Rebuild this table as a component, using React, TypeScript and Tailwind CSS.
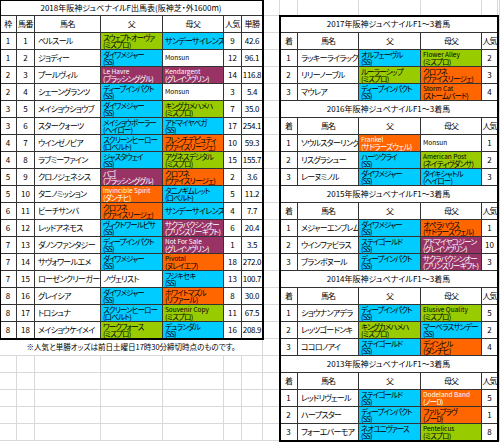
import React from "react";

// 血統セルの色
const colorCls: Record<string, string> = {
  g: "bg-[#99cc00] text-black",
  c: "bg-[#00ccff] text-black",
  o: "bg-[#ff6600] text-black",
  ow: "bg-[#ff6600] text-white",
  p: "bg-[#993366] text-white",
  w: "bg-white text-black",
};

type Blood = [string, string, string];
type Entry = [number, number, string, Blood, Blood, number, string];
type Placed = [number, string, Blood, Blood, number];

const entries: Entry[] = [
  [1, 1, "ベルスール", ["スウェプトオーヴァ", "(ミスプロ)", "g"], ["サンデーサイレンス", "", "c"], 9, "42.6"],
  [1, 2, "ジョディー", ["ダイワメジャー", "(SS)", "c"], ["Monsun", "", "w"], 12, "96.1"],
  [2, 3, "プールヴィル", ["Le Havre", "(ブラッシンググル)", "p"], ["Kendargent", "(グレイソヴリン)", "p"], 14, "116.8"],
  [2, 4, "シェーングランツ", ["ディープインパクト", "(SS)", "c"], ["Monsun", "", "w"], 3, "5.4"],
  [3, 5, "メイショウショウブ", ["ダイワメジャー", "(SS)", "c"], ["キングカメハメハ", "(ミスプロ)", "g"], 7, "35.0"],
  [3, 6, "スタークォーツ", ["メイショウボーラー", "(ヘイロー)", "c"], ["アドマイヤベガ", "(SS)", "c"], 17, "254.1"],
  [4, 7, "ウインゼノビア", ["スクリーンヒーロー", "(ロベルト)", "c"], ["フレンチデピュティ", "(ヴァイスリージェ)", "o"], 10, "59.3"],
  [4, 8, "ラブミーファイン", ["ジャスタウェイ", "(SS)", "c"], ["アグネスデジタル", "(ミスプロ)", "g"], 15, "155.7"],
  [5, 9, "クロノジェネシス", ["バゴ", "(ブラッシンググル)", "p"], ["クロフネ", "(ヴァイスリージェ)", "o"], 2, "3.6"],
  [5, 10, "タニノミッション", ["Invincible Spirit", "(ダンチヒ)", "ow"], ["タニノギムレット", "(ロベルト)", "c"], 5, "11.2"],
  [6, 11, "ビーチサンバ", ["クロフネ", "(ヴァイスリージェ)", "o"], ["サンデーサイレンス", "", "c"], 4, "7.7"],
  [6, 12, "レッドアネモス", ["ヴィクトワールピサ", "(SS)", "c"], ["サクラバクシンオー", "(プリンスリーギフト)", "p"], 6, "20.4"],
  [7, 13, "ダノンファンタジー", ["ディープインパクト", "(SS)", "c"], ["Not For Sale", "(グレイソヴリン)", "p"], 1, "3.5"],
  [7, 14, "サヴォワールエメ", ["ダイワメジャー", "(SS)", "c"], ["Pivotal", "(ヌレイエフ)", "o"], 18, "272.0"],
  [7, 15, "ローゼンクリーガー", ["ノヴェリスト", "", "w"], ["フジキセキ", "(SS)", "c"], 13, "100.7"],
  [8, 16, "グレイシア", ["ダイワメジャー", "(SS)", "c"], ["ホワイトマズル", "(リファール)", "o"], 8, "30.0"],
  [8, 17, "トロシュナ", ["スクリーンヒーロー", "(ロベルト)", "c"], ["Souvenir Copy", "(ミスプロ)", "g"], 11, "67.5"],
  [8, 18, "メイショウケイメイ", ["ワークフォース", "(ミスプロ)", "g"], ["デュランダル", "(SS)", "c"], 16, "208.9"],
];

const history: { year: number; rows: Placed[] }[] = [
  {
    year: 2017,
    rows: [
      [1, "ラッキーライラック", ["オルフェーヴル", "(SS)", "c"], ["Flower Alley", "(ミスプロ)", "g"], 2],
      [2, "リリーノーブル", ["ルーラーシップ", "(ミスプロ)", "g"], ["クロフネ", "(ヴァイスリージェ)", "o"], 3],
      [3, "マウレア", ["ディープインパクト", "(SS)", "c"], ["Storm Cat", "(ストームバード)", "o"], 4],
    ],
  },
  {
    year: 2016,
    rows: [
      [1, "ソウルスターリング", ["Frankel", "(サドラーズウェル)", "ow"], ["Monsun", "", "w"], 1],
      [2, "リスグラシュー", ["ハーツクライ", "(SS)", "c"], ["American Post", "(ネイティヴダンサ)", "g"], 2],
      [3, "レーヌミノル", ["ダイワメジャー", "(SS)", "c"], ["タイキシャトル", "(ヘイロー)", "c"], 3],
    ],
  },
  {
    year: 2015,
    rows: [
      [1, "メジャーエンブレム", ["ダイワメジャー", "(SS)", "c"], ["オペラハウス", "(サドラーズウェル)", "o"], 1],
      [2, "ウインファビラス", ["ステイゴールド", "(SS)", "c"], ["アドマイヤコジーン", "(グレイソヴリン)", "p"], 10],
      [3, "ブランボヌール", ["ディープインパクト", "(SS)", "c"], ["サクラバクシンオー", "(プリンスリーギフト)", "p"], 3],
    ],
  },
  {
    year: 2014,
    rows: [
      [1, "ショウナンアデラ", ["ディープインパクト", "(SS)", "c"], ["Elusive Quality", "(ミスプロ)", "g"], 5],
      [2, "レッツゴードンキ", ["キングカメハメハ", "(ミスプロ)", "g"], ["マーベラスサンデー", "(SS)", "c"], 2],
      [3, "ココロノアイ", ["ステイゴールド", "(SS)", "c"], ["デインヒル", "(ダンチヒ)", "o"], 4],
    ],
  },
  {
    year: 2013,
    rows: [
      [1, "レッドリヴェール", ["ステイゴールド", "(SS)", "c"], ["Dodeland Band", "(ノーD)", "ow"], 5],
      [2, "ハープスター", ["ディープインパクト", "(SS)", "c"], ["ファルブラヴ", "(ノーD)", "o"], 1],
      [3, "フォーエバーモア", ["ネオユニヴァース", "(SS)", "c"], ["Pentelicus", "(ミスプロ)", "g"], 8],
    ],
  },
];

const cell = "border-r border-b border-[#333] overflow-hidden whitespace-nowrap";

const Center = ({ children, className = "" }: { children: React.ReactNode; className?: string }) => (
  <div className={`${cell} flex items-center justify-center text-[8px] ${className}`}>{children}</div>
);

const NameCell = ({ name }: { name: string }) => (
  <div className={`${cell} flex items-center pl-[3px] text-[8px] tracking-[-0.7px] bg-white`}>{name}</div>
);

const BloodCell = ({ blood }: { blood: Blood }) => {
  const [l1, l2, k] = blood;
  const ascii = /^[A-Za-z ]+$/.test(l1);
  if (!l2) {
    return (
      <div
        className={`${cell} ${colorCls[k]} flex items-center pl-[2px] ${
          ascii ? "text-[6.5px] tracking-normal" : "text-[8px] tracking-[-0.7px]"
        }`}
      >
        {l1}
      </div>
    );
  }
  return (
    <div className={`${cell} ${colorCls[k]} flex flex-col justify-center pl-[2px] leading-[7.5px]`}>
      <span className={ascii ? "text-[6.5px]" : "text-[7.5px] tracking-[-0.9px]"}>{l1}</span>
      <span className="text-[7.5px] tracking-[-0.8px]">{l2}</span>
    </div>
  );
};

export default function App() {
  return (
    <div className="w-[500px] h-[442px] overflow-hidden bg-white text-black font-['Noto_Sans_CJK_JP',sans-serif] [font-feature-settings:'palt']">
      <div className="grid grid-cols-[17px_18px_66px_62px_61px_18px_21px_17px_18px_61px_62px_61px_16px_2px] grid-rows-[16px_repeat(25,17px)]">
        {/* 出馬表 */}
        <div className="col-start-1 col-span-7 row-start-1 row-span-20 grid grid-cols-[17px_18px_66px_62px_61px_18px_21px] grid-rows-[16px_repeat(19,17px)] outline-2 outline-black -outline-offset-1 relative z-10">
          <div className={`${cell} col-span-7 flex items-center justify-center text-[8px]`}>
            2018年阪神ジュベナイルF出馬表(阪神芝・外1600m)
          </div>
          {["枠", "馬番", "馬名", "父", "母父", "人気", "単勝"].map((h) => (
            <Center key={h} className="tracking-[-0.5px]">{h}</Center>
          ))}
          {entries.map((e) => (
            <React.Fragment key={e[1]}>
              <Center>{e[0]}</Center>
              <Center>{e[1]}</Center>
              <NameCell name={e[2]} />
              <BloodCell blood={e[3]} />
              <BloodCell blood={e[4]} />
              <Center>{e[5]}</Center>
              <Center className="tracking-[-0.3px]">{e[6]}</Center>
            </React.Fragment>
          ))}
        </div>
        <div className="col-start-1 col-span-7 row-start-21 border-r border-b border-[#d9d9d9] flex items-center justify-center text-[7.5px] bg-white">
          ※人気と単勝オッズは前日土曜日17時30分締切時点のものです。
        </div>

        {/* 過去の1～3着馬 */}
        <div className="col-start-9 col-span-5 row-start-2 row-span-25 grid grid-cols-[18px_61px_62px_61px_16px] grid-rows-[repeat(25,17px)] outline-2 outline-black -outline-offset-1 relative z-10">
          {history.map((t) => (
            <React.Fragment key={t.year}>
              <div className={`${cell} col-span-5 flex items-center justify-center text-[8px]`}>
                {t.year}年阪神ジュベナイルF1～3着馬
              </div>
              {["着", "馬名", "父", "母父", "人気"].map((h) => (
                <Center key={h} className="tracking-[-1px]">{h}</Center>
              ))}
              {t.rows.map((r) => (
                <React.Fragment key={r[0]}>
                  <Center>{r[0]}</Center>
                  <NameCell name={r[1]} />
                  <BloodCell blood={r[2]} />
                  <BloodCell blood={r[3]} />
                  <Center>{r[4]}</Center>
                </React.Fragment>
              ))}
            </React.Fragment>
          ))}
        </div>

        {/* シートの空セル */}
        {Array.from({ length: 92 }).map((_, i) => (
          <div key={i} className="border-r border-b border-[#d9d9d9] bg-white" />
        ))}
      </div>
    </div>
  );
}
